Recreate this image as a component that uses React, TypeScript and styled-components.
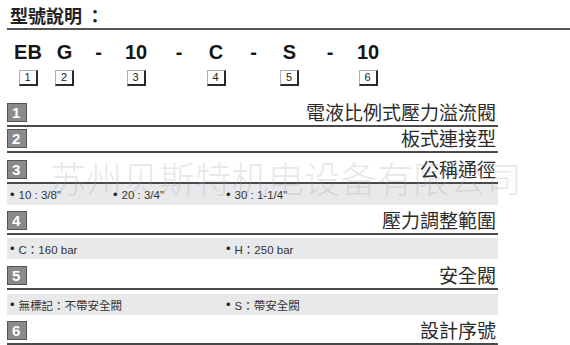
import React from 'react';
import styled, { createGlobalStyle } from 'styled-components';

const GlobalStyle = createGlobalStyle`
  html, body {
    margin: 0;
    padding: 0;
    background: #ffffff;
  }
  body {
    font-family: 'Liberation Sans', Arial, sans-serif;
  }
`;

const CJK = `'Noto Sans CJK TC', 'Noto Sans CJK SC', sans-serif`;

// token widths line up the code letters with their key boxes
const codeColumns = '40px 33px 35px 40px 46px 28px 47px 25px 56px 20px';

const codeTokens = ['EB', 'G', '-', '10', '-', 'C', '-', 'S', '-', '10'];
const keyNums = ['1', '2', '', '3', '', '4', '', '5', '', '6'];

type BandItem = { text: string; col: number };

type Section = {
  num: string;
  title: string;
  gap: number;
  band?: { gap: number; items: BandItem[] };
};

const sections: Section[] = [
  { num: '1', title: '電液比例式壓力溢流閥', gap: 16 },
  { num: '2', title: '板式連接型', gap: 1 },
  {
    num: '3',
    title: '公稱通徑',
    gap: 6,
    band: {
      gap: 0,
      items: [
        { text: '10 : 3/8"', col: 1 },
        { text: '20 : 3/4"', col: 2 },
        { text: '30 : 1-1/4"', col: 3 },
      ],
    },
  },
  {
    num: '4',
    title: '壓力調整範圍',
    gap: 5,
    band: {
      gap: 3,
      items: [
        { text: 'C：160 bar', col: 1 },
        { text: 'H：250 bar', col: 3 },
      ],
    },
  },
  {
    num: '5',
    title: '安全閥',
    gap: 6,
    band: {
      gap: 4,
      items: [
        { text: '無標記：不帶安全閥', col: 1 },
        { text: 'S：帶安全閥', col: 3 },
      ],
    },
  },
  { num: '6', title: '設計序號', gap: 5 },
];

const App = () => {
  return (
    <>
      <GlobalStyle />
      <Page>
        <Header>型號說明 ：</Header>

        <CodeRow>
          {codeTokens.map((t, i) => (
            <CodeToken key={`code_${i}`}>{t}</CodeToken>
          ))}
        </CodeRow>
        <KeyRow>
          {keyNums.map((n, i) => (
            <KeyCell key={`key_${i}`}>{n && <KeyBox>{n}</KeyBox>}</KeyCell>
          ))}
        </KeyRow>

        {sections.map((s) => (
          <React.Fragment key={`sec_${s.num}`}>
            <SectionRow $gap={s.gap}>
              <Badge>{s.num}</Badge>
              <SectionTitle>{s.title}</SectionTitle>
            </SectionRow>
            {s.band && (
              <Band $gap={s.band.gap}>
                {s.band.items.map((item, i) => (
                  <BandText key={`band_${s.num}_${i}`} $col={item.col}>
                    <Bullet>•</Bullet>
                    {item.text}
                  </BandText>
                ))}
              </Band>
            )}
          </React.Fragment>
        ))}

        <Watermark>苏州贝斯特机电设备有限公司</Watermark>
      </Page>
    </>
  );
};

export default App;

const Page = styled.div`
  position: relative;
  width: 570px;
  height: 345px;
  overflow: hidden;
  background: #fff;
`;

const Header = styled.div`
  box-sizing: border-box;
  height: 30px;
  margin-left: 7px;
  padding: 5px 0 0 3px;
  border-bottom: 2px solid #555;
  font-family: ${CJK};
  font-weight: 700;
  font-size: 18px;
  line-height: 20px;
  color: #222;
`;

const CodeRow = styled.div`
  display: grid;
  grid-template-columns: ${codeColumns};
  justify-items: center;
  margin-top: 12px;
  padding-left: 8px;
  height: 20px;
`;

const CodeToken = styled.span`
  font-weight: 700;
  font-size: 20px;
  line-height: 20px;
  color: #151515;
  white-space: nowrap;
`;

const KeyRow = styled.div`
  display: grid;
  grid-template-columns: ${codeColumns};
  justify-items: center;
  margin-top: 8px;
  padding-left: 8px;
  height: 16px;
`;

const KeyCell = styled.div`
  display: flex;
  justify-content: center;
`;

const KeyBox = styled.span`
  box-sizing: border-box;
  width: 19px;
  height: 16px;
  display: flex;
  align-items: center;
  justify-content: center;
  background: #fff;
  border-top: 1px solid #b0b0b0;
  border-left: 1px solid #b0b0b0;
  border-right: 2px solid #2a2a2a;
  border-bottom: 2px solid #2a2a2a;
  font-size: 11px;
  line-height: 1;
  color: #222;
`;

const SectionRow = styled.div<{ $gap: number }>`
  box-sizing: border-box;
  height: 25px;
  margin: ${(p) => p.$gap}px 0 0 7px;
  width: 491px;
  padding-bottom: 3px;
  border-bottom: 2px solid #4a4a4a;
  display: flex;
  align-items: flex-end;
  justify-content: space-between;
`;

const Badge = styled.span`
  box-sizing: border-box;
  width: 20px;
  height: 19px;
  padding-left: 4px;
  background: #8a8a8a;
  border: 1px solid #555;
  color: #fff;
  font-weight: 700;
  font-size: 15px;
  line-height: 17px;
`;

const SectionTitle = styled.span`
  margin-right: 2px;
  font-family: ${CJK};
  font-size: 19px;
  line-height: 20px;
  color: #2b2b2b;
`;

const Band = styled.div<{ $gap: number }>`
  box-sizing: border-box;
  height: 21px;
  width: 491px;
  margin: ${(p) => p.$gap}px 0 0 7px;
  padding-left: 3px;
  background: #e8e9eb;
  display: grid;
  grid-template-columns: 103px 113px 1fr;
  align-items: center;
`;

const BandText = styled.span<{ $col: number }>`
  grid-column: ${(p) => p.$col};
  grid-row: 1;
  display: flex;
  align-items: center;
  font-family: 'Liberation Sans', ${CJK};
  font-size: 11.5px;
  color: #333;
  white-space: nowrap;
`;

const Bullet = styled.span`
  font-size: 13px;
  line-height: 1;
  margin-right: 4px;
  color: #222;
`;

const Watermark = styled.div`
  position: absolute;
  left: 50px;
  top: 157px;
  font-family: 'Noto Sans CJK SC', sans-serif;
  font-weight: 300;
  font-size: 36px;
  line-height: 40px;
  letter-spacing: 0.3px;
  color: rgba(160, 160, 160, 0.26);
  white-space: nowrap;
  pointer-events: none;
`;
